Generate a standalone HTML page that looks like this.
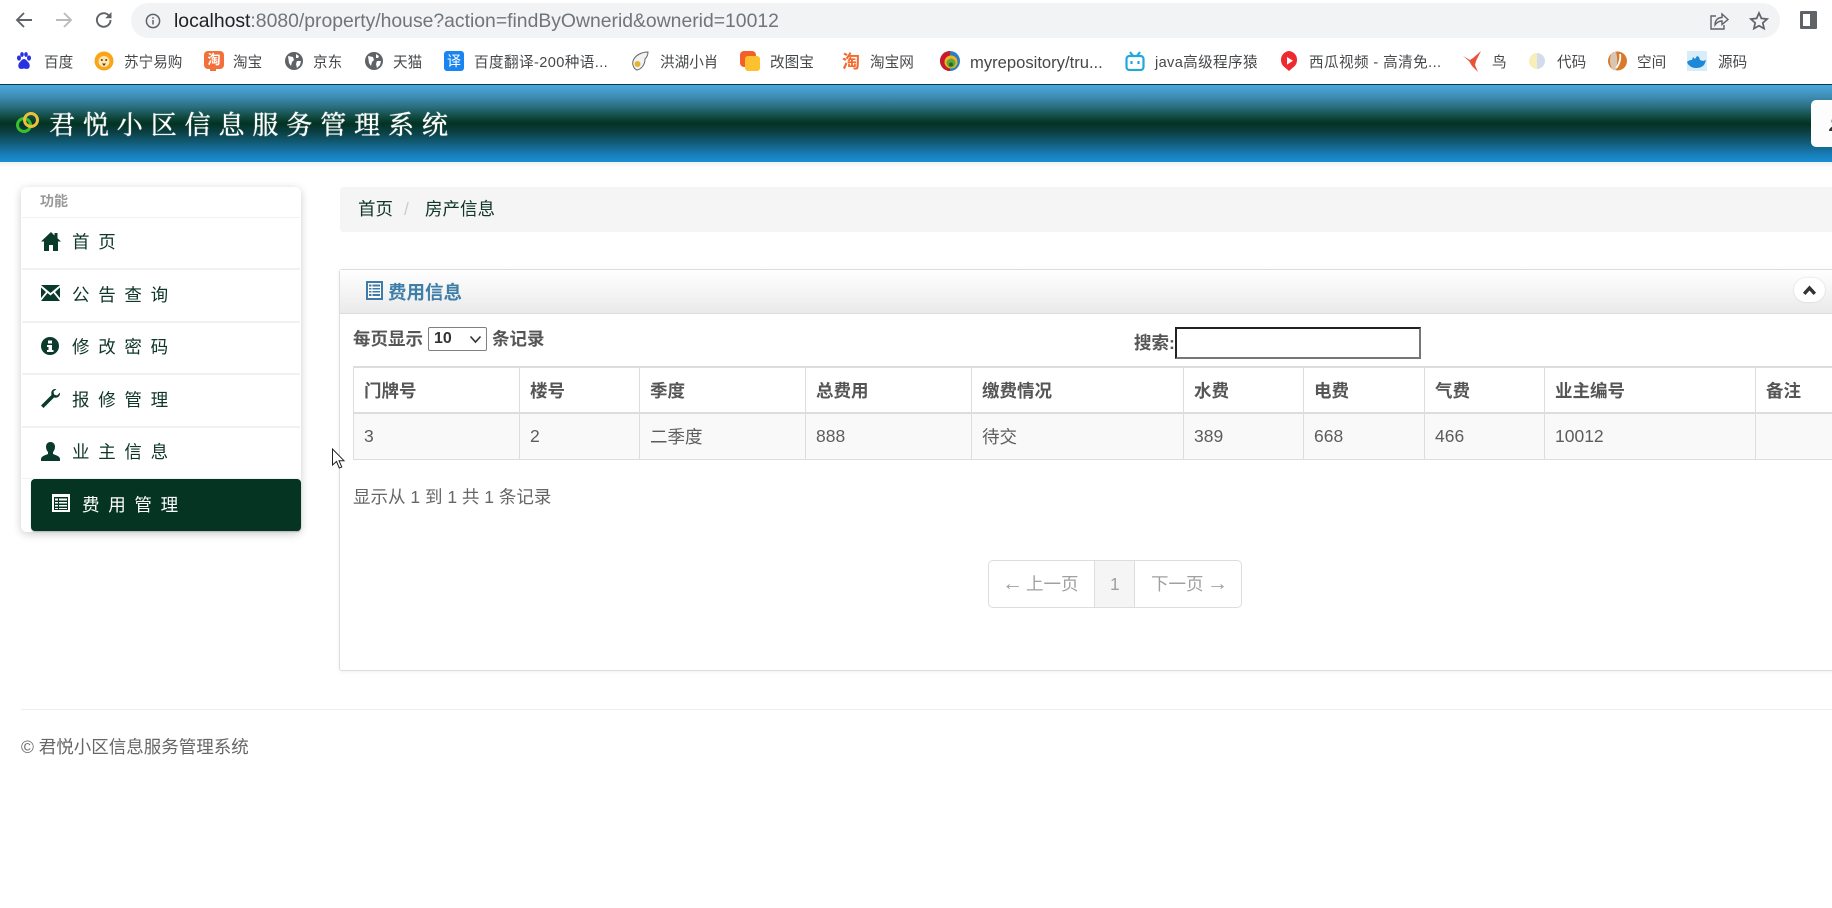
<!DOCTYPE html>
<html lang="zh-CN"><head><meta charset="utf-8"><title>君悦小区信息服务管理系统</title>
<style>
html,body{margin:0;padding:0;width:1832px;height:908px;overflow:hidden;background:#fff;font-family:"Liberation Sans","Noto Sans CJK SC",sans-serif;}
.a{position:absolute}
.t{position:absolute;white-space:nowrap;line-height:24px;height:24px;font-size:17.5px}
svg{position:absolute;display:block}
.bm{position:absolute;top:51px;line-height:24px;font-size:14.6px;color:#45484b;white-space:nowrap}
.nav{position:absolute;left:62px;font-size:17.5px;letter-spacing:8.7px;color:#0e3528;line-height:24px;white-space:nowrap}
.sep{position:absolute;left:22px;width:278px;height:2px;background:#f1f1f1}
table{position:absolute;left:353px;top:366px;width:1547px;table-layout:fixed;border-collapse:collapse;font-size:17.5px;color:#555}
th,td{border:1px solid #ddd;padding:0 0 0 10px;text-align:left;overflow:hidden;white-space:nowrap}
th{height:44px;font-weight:bold;color:#555;border-top:2px solid #ddd;border-bottom:2px solid #ddd}
td{height:44px;padding-bottom:1px;background:#f9f9f9;color:#5c5c5c}
</style></head><body>

<!-- browser toolbar -->
<svg style="left:14px;top:10px" width="20" height="20" viewBox="0 0 20 20" fill="none" stroke="#5f6368" stroke-width="1.9"><path d="M18 10H3M10 3l-7 7 7 7"/></svg>
<svg style="left:54px;top:10px" width="20" height="20" viewBox="0 0 20 20" fill="none" stroke="#b9bbbe" stroke-width="1.9"><path d="M2 10h15M10 3l7 7-7 7"/></svg>
<svg style="left:94px;top:10px" width="20" height="20" viewBox="0 0 20 20" fill="none" stroke="#5f6368" stroke-width="1.9"><path d="M16.5 10a6.8 6.8 0 1 1-2-4.8L17 7.6"/><path d="M17.5 2v6.3h-6.3" stroke="none" fill="#5f6368"/></svg>
<div class="a" style="left:131px;top:3px;width:1649px;height:35px;border-radius:18px;background:#f1f3f4"></div>
<svg style="left:145px;top:13px" width="16" height="16" viewBox="0 0 16 16" fill="none" stroke="#5f6368" stroke-width="1.5"><circle cx="8" cy="8" r="6.6"/><path d="M8 7v4.5M8 4.2v1.6"/></svg>
<div class="a" style="left:174px;top:8px;line-height:27px;font-size:19.36px;color:#70757a;white-space:nowrap"><span style="color:#202124">localhost</span>:8080/property/house?action=findByOwnerid&amp;ownerid=10012</div>
<svg style="left:1709px;top:11px" width="20" height="20" viewBox="0 0 20 20" fill="none" stroke="#5f6368" stroke-width="1.4"><path d="M7 5H2v13h13v-4"/><path d="M6 14c0-5 3-7.5 7-7.5V3l6 5.5-6 5V10c-3 0-5 1.200-7 4z"/></svg>
<svg style="left:1749px;top:11px" width="20" height="20" viewBox="0 0 20 20" fill="none" stroke="#5f6368" stroke-width="1.7"><path d="M10 2l2.400 5.400 5.800.6-4.400 3.900 1.300 5.700L10 14.700l-5.100 2.900 1.300-5.700L1.800 8l5.800-.6z"/></svg>
<div class="a" style="left:1800px;top:11px;width:17px;height:18px;box-sizing:border-box;border:3px solid #5f6368;border-right-width:7px;border-radius:1px;background:#fff"></div>

<!-- bookmarks -->
<svg style="left:16px;top:52px" width="16" height="18" viewBox="0 0 16 18" fill="#2932e1"><ellipse cx="3" cy="6" rx="2" ry="2.600"/><ellipse cx="6" cy="2.500" rx="1.800" ry="2.400"/><ellipse cx="10" cy="2.500" rx="1.800" ry="2.400"/><ellipse cx="13" cy="6" rx="2" ry="2.600"/><path d="M8 7c-2 0-3 2-4.500 3.500C1.500 12.500 2 17 5 17c1 0 2-.5 3-.5s2 .5 3 .5c3 0 3.500-4.500 1.500-6.500C11 9 10 7 8 7z"/></svg>
<div class="bm" style="left:44px">百度</div>
<svg style="left:94px;top:51px" width="20" height="20" viewBox="0 0 20 20"><circle cx="10" cy="10" r="9.500" fill="#f9a51a"/><circle cx="10" cy="10.500" r="5.500" fill="#fde6b0"/><circle cx="7.800" cy="9" r="1" fill="#63360d"/><circle cx="12.200" cy="9" r="1" fill="#63360d"/><path d="M8 12.500h4L10 15z" fill="#63360d"/></svg>
<div class="bm" style="left:124px">苏宁易购</div>
<div class="a" style="left:204px;top:51px;width:20px;height:18px;border-radius:4px;background:#f2703a;color:#fff;font-size:13px;line-height:18px;text-align:center;font-weight:bold">淘</div>
<div class="a" style="left:210px;top:68px;width:6px;height:3px;background:#f2703a"></div>
<div class="bm" style="left:233px">淘宝</div>
<svg style="left:285px;top:52px" width="18" height="18" viewBox="0 0 18 18"><circle cx="9" cy="9" r="9" fill="#5f6368"/><path d="M3 4l5 1 1 3-2 2-1 4-2-3zM11 2l3 2-1 2-2 0zM12 9l4 0-1 4-3 3-1-4z" fill="#fff"/></svg>
<div class="bm" style="left:313px">京东</div>
<svg style="left:365px;top:52px" width="18" height="18" viewBox="0 0 18 18"><circle cx="9" cy="9" r="9" fill="#5f6368"/><path d="M3 4l5 1 1 3-2 2-1 4-2-3zM11 2l3 2-1 2-2 0zM12 9l4 0-1 4-3 3-1-4z" fill="#fff"/></svg>
<div class="bm" style="left:393px">天猫</div>
<div class="a" style="left:444px;top:51px;width:20px;height:20px;border-radius:3px;background:#1a85f0;color:#fff;font-size:14px;line-height:20px;text-align:center">译</div>
<div class="bm" style="left:474px;letter-spacing:.4px">百度翻译-200种语...</div>
<svg style="left:630px;top:51px" width="20" height="20" viewBox="0 0 20 20" fill="none"><path d="M18 1C12 1 5 4 3 10c-1 4 1 8 4 9 5-1 8-6 8-11 2-2 3-4 3-7z" fill="#f2f2f2" stroke="#666"/><circle cx="7.500" cy="13" r="3" fill="#e2b52c"/></svg>
<div class="bm" style="left:660px">洪湖小肖</div>
<div class="a" style="left:740px;top:51px;width:16px;height:16px;border-radius:4px;background:#f4602a"></div>
<div class="a" style="left:745px;top:56px;width:15px;height:15px;border-radius:3px;background:#fdc02f"></div>
<div class="bm" style="left:770px">改图宝</div>
<div class="a" style="left:842px;top:50px;line-height:24px;font-size:18px;font-weight:bold;color:#f26a2e">淘</div>
<div class="bm" style="left:870px">淘宝网</div>
<svg style="left:940px;top:51px" width="20" height="20" viewBox="0 0 20 20"><circle cx="10" cy="10" r="10" fill="#2a7fc1"/><path d="M10 0a10 10 0 0 0 0 20z" fill="#c9182a"/><circle cx="11" cy="11" r="6.500" fill="#f4b221"/><circle cx="11" cy="12" r="4.500" fill="#5da83c"/><circle cx="11" cy="13.500" r="2" fill="#1f6a2a"/></svg>
<div class="bm" style="left:970px;font-size:16.6px">myrepository/tru...</div>
<svg style="left:1125px;top:51px" width="20" height="20" viewBox="0 0 20 20" fill="none" stroke="#20a8d8" stroke-width="2.200"><rect x="1.500" y="5" width="17" height="14" rx="3"/><path d="M5 1l3 4M15 1l-3 4"/><path d="M6.500 10v3M13.500 10v3"/></svg>
<div class="bm" style="left:1155px;letter-spacing:.35px">java高级程序猿</div>
<svg style="left:1279px;top:51px" width="20" height="20" viewBox="0 0 20 20"><path d="M10 0a9 9 0 0 1 4 16.500L10 20l-4-3.500A9 9 0 0 1 10 0z" fill="#ee2a2e"/><path d="M8 6l6 3.800-6 3.800z" fill="#fff"/></svg>
<div class="bm" style="left:1309px;letter-spacing:.4px">西瓜视频 - 高清免...</div>
<svg style="left:1462px;top:50px" width="20" height="22" viewBox="0 0 20 22"><path d="M1 6l7 4 3-2 8-7-5 10-1 4 3 7-6-6-3-5z" fill="#e8533a"/></svg>
<div class="bm" style="left:1492px">鸟</div>
<svg style="left:1529px;top:53px" width="16" height="16" viewBox="0 0 16 16"><path d="M8 0a8 8 0 0 0 0 16z" fill="#f7efba"/><path d="M8 0a8 8 0 0 1 0 16z" fill="#d3dbec"/></svg>
<div class="bm" style="left:1557px">代码</div>
<svg style="left:1608px;top:51px" width="19" height="20" viewBox="0 0 19 20"><circle cx="9.500" cy="10" r="9.500" fill="#d97a2b"/><path d="M5 1c-4 3-4 13 0 18h3c1-5 2-11 0-18z" fill="#d8c6b4"/><path d="M12 3c1 5-1 11-4 14" fill="none" stroke="#fff" stroke-width="1.800"/></svg>
<div class="bm" style="left:1637px">空间</div>
<div class="a" style="left:1687px;top:51px;width:20px;height:20px;background:#d8edf8"></div>
<svg style="left:1687px;top:53px" width="20" height="16" viewBox="0 0 20 16"><path d="M0 9c2-2 4-2 5-2l1-3 2 2 2-3 2 1 1 3 3 1 3-1-1 3c-1 3-4 5-9 5-5 0-8-3-9-6z" fill="#1e88d8"/></svg>
<div class="bm" style="left:1718px">源码</div>

<!-- header -->
<div class="a" style="left:0;top:84px;width:1832px;height:78px;border-top:1px solid #0c3a44;box-sizing:border-box;background:linear-gradient(to bottom,#4aa8de 0%,#3f8fb8 14%,#2b6f80 28%,#0f483f 42%,#033222 50%,#0a3e40 60%,#115a74 74%,#1779b0 88%,#1a8fd6 100%)"></div>
<div class="a" style="left:0;top:162px;width:1832px;height:6px;background:linear-gradient(#f1f1f1,#fff)"></div>
<svg style="left:14px;top:110px" width="30" height="26" viewBox="0 0 30 26" fill="none"><circle cx="10" cy="15" r="6.500" stroke="#38c02e" stroke-width="3"/><circle cx="17" cy="10" r="6.500" stroke="#ecc13a" stroke-width="3"/></svg>
<div class="t" style="left:49px;top:107px;line-height:34px;height:34px;font-size:26px;letter-spacing:7.900px;color:#fff;font-family:'Noto Serif CJK SC','Liberation Serif',serif;text-shadow:0 0 .7px #fff,0 0 .7px #fff">君悦小区信息服务管理系统</div>
<div class="a" style="left:1811px;top:100px;width:30px;height:47px;border-radius:5px;background:#fdfdfd"></div>
<svg style="left:1829px;top:117px" width="14" height="15" viewBox="0 0 14 15"><circle cx="6" cy="4" r="3.500" fill="#333"/><path d="M0 14c0-3 3-4 4-5h4c1 1 4 2 4 5z" fill="#333"/></svg>

<!-- sidebar -->
<div class="a" style="left:21px;top:187px;width:280px;height:345px;background:#fff;border-radius:6px;box-shadow:0 2px 9px rgba(0,0,0,.2)"></div>
<div class="t" style="left:40px;top:189px;font-size:14px;color:#999;font-weight:bold">功能</div>
<div class="sep" style="top:217px;height:1px"></div><div class="sep" style="top:268px"></div><div class="sep" style="top:321px"></div><div class="sep" style="top:373px"></div><div class="sep" style="top:426px"></div><div class="sep" style="top:478px;height:1px"></div>

<svg style="left:41px;top:232px" width="20" height="19" viewBox="0 0 20 19" fill="#0a3a2b"><path d="M10 0L0 9.500h3V19h5v-6h4v6h5V9.500h3L16.500 6.200V1h-3v2.500z"/></svg>
<div class="nav" style="left:72px;top:230px">首页</div>
<svg style="left:41px;top:285px" width="19" height="16" viewBox="0 0 19 16" fill="#0a3a2b"><path d="M0 0h19L9.500 8zM0 2.500V13l5-6zM19 2.500V13l-5-6zM0 16h19l-6.500-8-3 2.500-3-2.500z"/></svg>
<div class="nav" style="left:72px;top:283px">公告查询</div>
<svg style="left:41px;top:337px" width="18" height="18" viewBox="0 0 18 18"><circle cx="9" cy="9" r="9" fill="#0a3a2b"/><rect x="7" y="3.500" width="4" height="3" fill="#fff"/><path d="M6 8h5v5h1.500v2h-6.500v-2h1.500v-3H6z" fill="#fff"/></svg>
<div class="nav" style="left:72px;top:335px">修改密码</div>
<svg style="left:41px;top:389px" width="19" height="19" viewBox="0 0 19 19" fill="#0a3a2b"><path d="M19 3.500L16 6.500 13 5.500 12.500 2.500 15.500 0C12 -.5 9.500 2 10.500 6L0 16.500 2.500 19 13 8.500c3.500 1 6.500-1.500 6-5z"/></svg>
<div class="nav" style="left:72px;top:388px">报修管理</div>
<svg style="left:41px;top:442px" width="19" height="19" viewBox="0 0 19 19" fill="#0a3a2b"><path d="M9.500 0c3 0 4.500 2.200 4.500 5 0 2-1 4-2 5v2c2 1 7 2 7 5v2H0v-2c0-3 5-4 7-5v-2C6 9 5 7 5 5c0-2.800 1.500-5 4.500-5z"/></svg>
<div class="nav" style="left:72px;top:440px">业主信息</div>
<div class="a" style="left:31px;top:479px;width:270px;height:52px;border-radius:4px;background:#053423;box-shadow:0 1px 1px rgba(0,0,0,.3)"></div>
<svg style="left:52px;top:494px" width="18" height="18" viewBox="0 0 18 18"><rect width="18" height="18" fill="#fff"/><path d="M2 3h14v13H2z" fill="#053423"/><path d="M3 4.500h12v2H3zM3 8h12v1.500H3zM3 11h12v1.500H3zM3 14h12v1H3z" fill="#fff"/><path d="M6 4h1v11H6z" fill="#053423"/></svg>
<div class="nav" style="left:82px;top:493px;color:#fff">费用管理</div>

<!-- breadcrumb -->
<div class="a" style="left:340px;top:187px;width:1500px;height:45px;background:#f5f5f5;border-radius:3px"></div>
<div class="t" style="left:358px;top:197px;color:#0e3528">首页</div>
<div class="t" style="left:404px;top:197px;color:#ccc">/</div>
<div class="t" style="left:425px;top:197px;color:#0e3528">房产信息</div>

<!-- panel -->
<div class="a" style="left:339px;top:269px;width:1510px;height:402px;box-sizing:border-box;border:1px solid #ddd;border-radius:3px;background:#fff;box-shadow:0 1px 5px rgba(0,0,0,.06)"></div>
<div class="a" style="left:340px;top:270px;width:1500px;height:43px;border-bottom:1px solid #ddd;background:linear-gradient(#fff,#eaeaea)"></div>
<svg style="left:366px;top:281px" width="17" height="19" viewBox="0 0 17 19"><rect width="17" height="19" fill="#3d7ca8"/><rect x="2" y="2" width="13" height="15" fill="#fff"/><path d="M3 3.500h11v2H3zM3 7h11v1.500H3zM3 10h11v1.500H3zM3 13h11v2H3z" fill="#3d7ca8"/><path d="M5.500 3h1v13h-1z" fill="#fff"/></svg>
<div class="t" style="left:388px;top:281px;font-size:18.500px;font-weight:bold;color:#3f7ea8">费用信息</div>
<div class="a" style="left:1794px;top:278px;width:31px;height:24px;border-radius:13px;background:#fff;box-shadow:0 0 2px rgba(0,0,0,.15)"></div>
<svg style="left:1803px;top:285px" width="13" height="10" viewBox="0 0 13 10" fill="none" stroke="#333" stroke-width="3.400"><path d="M1.200 8.800l5.300-5.800 5.300 5.800"/></svg>

<div class="t" style="left:353px;top:327px;font-weight:bold;color:#555">每页显示</div>
<div class="a" style="left:428px;top:327px;width:59px;height:24px;box-sizing:border-box;border:1px solid #808080;border-radius:2px;background:#fff"></div>
<div class="t" style="left:434px;top:327px;font-size:16px;font-weight:bold;color:#333">10</div>
<svg style="left:469px;top:335px" width="13" height="9" viewBox="0 0 13 9" fill="none" stroke="#333" stroke-width="1.600"><path d="M1.500 1.500l5 5.500 5-5.500"/></svg>
<div class="t" style="left:492px;top:327px;font-weight:bold;color:#555">条记录</div>
<div class="t" style="left:1134px;top:331px;font-weight:bold;color:#555">搜索:</div>
<div class="a" style="left:1175px;top:327px;width:246px;height:32px;box-sizing:border-box;border:2px solid;border-color:#222 #767676 #767676 #222;background:#fff"></div>

<table>
<colgroup><col style="width:166px"><col style="width:120px"><col style="width:166px"><col style="width:166px"><col style="width:212px"><col style="width:120px"><col style="width:121px"><col style="width:120px"><col style="width:211px"><col style="width:145px"></colgroup>
<tr><th>门牌号</th><th>楼号</th><th>季度</th><th>总费用</th><th>缴费情况</th><th>水费</th><th>电费</th><th>气费</th><th>业主编号</th><th>备注</th></tr>
<tr><td>3</td><td>2</td><td>二季度</td><td>888</td><td>待交</td><td>389</td><td>668</td><td>466</td><td>10012</td><td></td></tr>
</table>

<div class="t" style="left:353px;top:485px;color:#666">显示从 1 到 1 共 1 条记录</div>

<div class="a" style="left:988px;top:560px;width:254px;height:48px;box-sizing:border-box;border:1px solid #ddd;border-radius:5px;background:#fff"></div>
<div class="a" style="left:1094px;top:561px;width:41px;height:46px;box-sizing:border-box;border-left:1px solid #ddd;border-right:1px solid #ddd;background:#f5f5f5"></div>
<div class="t" style="left:1002px;top:572px;font-size:21px;color:#a0a0a0">←</div>
<div class="t" style="left:1026px;top:572px;color:#a0a0a0">上一页</div>
<div class="t" style="left:1110px;top:572px;color:#a0a0a0">1</div>
<div class="t" style="left:1151px;top:572px;color:#a0a0a0">下一页</div>
<div class="t" style="left:1207px;top:572px;font-size:21px;color:#a0a0a0">→</div>

<!-- cursor -->
<svg style="left:331px;top:448px" width="15" height="22" viewBox="0 0 15 22"><path d="M1.500 1v16l4-3.500 2.800 6.500 2.500-1-2.800-6.300h5z" fill="#fff" stroke="#222" stroke-width="1"/></svg>

<!-- footer -->
<div class="a" style="left:21px;top:709px;width:1811px;height:1px;background:#eee"></div>
<div class="t" style="left:21px;top:735px;color:#666">© 君悦小区信息服务管理系统</div>
</body></html>
